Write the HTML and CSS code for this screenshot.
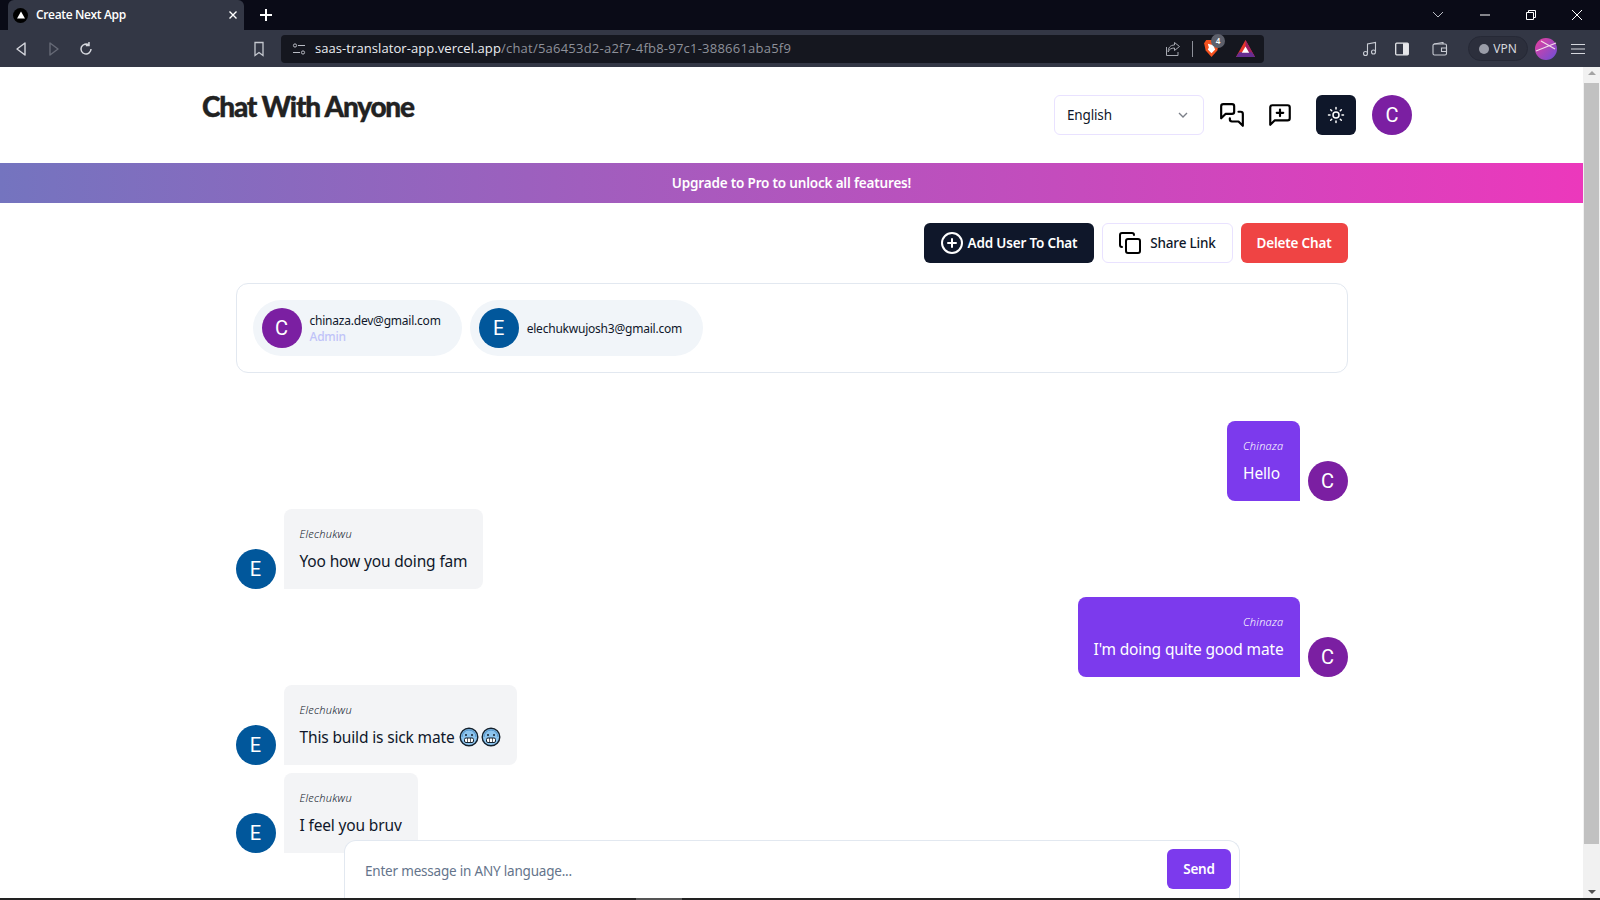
FILE: index.html
```html
<!DOCTYPE html>
<html lang="en">
<head>
    <meta charset="UTF-8">
    <meta name="viewport" content="width=device-width, initial-scale=1.0">
    <title>Create Next App</title>
    <link rel="stylesheet" href="styles.css">
</head>
<body>
    <!-- browser frame -->
    <div class="tabstrip">
        <div class="tab">
            <span class="favicon"><svg width="8" height="8" viewBox="0 0 8 8"><path d="M4 .5 8 7.500H0z" fill="#fff"/></svg></span>
            <span class="tab-title">Create Next App</span>
            <svg class="tab-close" width="10" height="10" viewBox="0 0 10 10"><path d="M1.500 1.500l7 7M8.500 1.500l-7 7" stroke="#fff" stroke-width="1.400"/></svg>
        </div>
        <svg class="new-tab" width="14" height="14" viewBox="0 0 14 14"><path d="M7 1v12M1 7h12" stroke="#fff" stroke-width="2"/></svg>
        <div class="window-btns">
            <svg width="14" height="10" viewBox="0 0 14 10"><path d="M2 2l5 5 5-5" fill="none" stroke="#b9bcc4" stroke-width="1"/></svg>
            <svg width="12" height="12" viewBox="0 0 12 12"><path d="M1 6h10" stroke="#fff" stroke-width="1"/></svg>
            <svg width="12" height="12" viewBox="0 0 12 12"><path d="M1.500 3.500h7v7h-7zM3.500 3.500v-2h7v7h-2" fill="none" stroke="#fff" stroke-width="1"/></svg>
            <svg width="12" height="12" viewBox="0 0 12 12"><path d="M1 1l10 10M11 1 1 11" stroke="#fff" stroke-width="1"/></svg>
        </div>
    </div>

    <div class="toolbar">
        <div class="nav-btns">
            <svg width="14" height="16" viewBox="0 0 14 16"><path d="M11 2 3 8l8 6z" fill="none" stroke="#d5d7dd" stroke-width="1.400" stroke-linejoin="round"/></svg>
            <svg width="14" height="16" viewBox="0 0 14 16"><path d="M3 2l8 6-8 6z" fill="none" stroke="#666a76" stroke-width="1.400" stroke-linejoin="round"/></svg>
            <svg class="reload" width="16" height="16" viewBox="0 0 16 16"><path d="M13 8a5 5 0 1 1-2-4M11 1v3.400H7.800" fill="none" stroke="#d5d7dd" stroke-width="1.500"/></svg>
        </div>
        <svg class="bookmark" width="12" height="16" viewBox="0 0 12 16"><path d="M2 1.500h8v13l-4-3-4 3z" fill="none" stroke="#c5c8cf" stroke-width="1.300"/></svg>
        <div class="address">
            <svg width="14" height="14" viewBox="0 0 14 14"><g fill="none" stroke="#b9bcc4" stroke-width="1"><circle cx="3" cy="3.500" r="1.600"/><path d="M6 3.500h7M1 10.500h7"/><circle cx="11" cy="10.500" r="1.600"/></g></svg>
            <span class="url"><span class="url-host">saas-translator-app.vercel.app</span>/chat/5a6453d2-a2f7-4fb8-97c1-388661aba5f9</span>
            <svg class="share" width="16" height="16" viewBox="0 0 16 16"><path d="M9.500 1.500l5 4-5 4V7C6 7 4 8.500 3.200 11c-.2-4 2-7 6.300-7zM13 11v3.500H1.500V6" fill="none" stroke="#a5a8b0" stroke-width="1"/></svg>
            <span class="addr-sep"></span>
            <span class="shield">
                <svg width="17" height="19" viewBox="0 0 16 18"><path d="M3 1h10l2 3-1.500 7L8 17 2.500 11 1 4z" fill="#f4511e"/><path d="M4.500 4.500l3.500 1 3.500-1-1 3.500 1 2-3.500 3.500L4.500 10l1-2z" fill="#fff"/></svg>
                <span class="shield-count">4</span>
            </span>
            <svg class="bat" width="19" height="17" viewBox="0 0 18 16"><path d="M9 0l9 16H0z" fill="#e8362a"/><path d="M9 0l9 16h-5L9 6z" fill="#9e1f63"/><path d="M0 16l3-4.500h12l3 4.500z" fill="#662d91"/><path d="M9 6l3.500 6h-7z" fill="#fff"/></svg>
        </div>
        <div class="tool-btns">
            <svg class="tool-music" width="16" height="16" viewBox="0 0 16 16"><g fill="none" stroke="#c9ccd4" stroke-width="1.100"><path d="M5.500 12.500V3l8-1.500v9.500"/><circle cx="3.500" cy="12.500" r="2"/><circle cx="11.500" cy="11" r="2"/></g></svg>
            <svg class="tool-side" width="14" height="14" viewBox="0 0 14 14"><rect x=".7" y="1.200" width="12.600" height="11.600" rx="1" fill="#333745" stroke="#e6e7ea" stroke-width="1.300"/><rect x="8" y="1.200" width="5.300" height="11.600" fill="#e6e7ea"/></svg>
            <svg width="16" height="14" viewBox="0 0 16 14"><g fill="none" stroke="#c9ccd4" stroke-width="1.100"><rect x="1" y="2" width="13.500" height="11" rx="1.500"/><path d="M2 2l9-1.500V2M9.500 6h5v3.500h-5z"/></g></svg>
        </div>
        <div class="vpn"><span class="vpn-dot"></span>VPN</div>
        <svg class="profile" width="22" height="22" viewBox="0 0 22 22"><defs><linearGradient id="pf" x1="0" y1="0" x2="1" y2="1"><stop offset="0" stop-color="#ea3d9c"/><stop offset="1" stop-color="#6a4fd8"/></linearGradient></defs><circle cx="11" cy="11" r="11" fill="url(#pf)"/><path d="M1 13 21 5M6 3l14 8" stroke="#f4dbe8" stroke-width="1.200"/></svg>
        <svg class="menu" width="14" height="12" viewBox="0 0 14 12"><path d="M0 1.500h14M0 6h14M0 10.500h14" stroke="#d5d7dd" stroke-width="1.200"/></svg>
    </div>

    <div class="viewport">
        <div class="page">
            <header class="site-header">
                <a class="logo">Chat With Anyone</a>
                <div class="header-actions">
                    <div class="lang-select">
                        <span>English</span>
                        <svg width="16" height="16" viewBox="0 0 24 24" fill="none" stroke="#7b7f88" stroke-width="2"><path d="m6 9 6 6 6-6"/></svg>
                    </div>
                    <svg class="icon-link" width="26" height="26" viewBox="0 0 24 24" fill="none" stroke="#000" stroke-width="2" stroke-linejoin="round" stroke-linecap="round"><path d="M14 9a2 2 0 0 1-2 2H6l-4 4V4c0-1.100.9-2 2-2h8a2 2 0 0 1 2 2v5Z"/><path d="M18 9h2a2 2 0 0 1 2 2v11l-4-4h-6a2 2 0 0 1-2-2v-1"/></svg>
                    <svg class="icon-link" width="26" height="26" viewBox="0 0 24 24" fill="none" stroke="#000" stroke-width="2" stroke-linejoin="round" stroke-linecap="round"><path d="M21 15a2 2 0 0 1-2 2H7l-4 4V5a2 2 0 0 1 2-2h14a2 2 0 0 1 2 2z"/><path d="M12 7v6M9 10h6"/></svg>
                    <button class="theme-btn">
                        <svg width="18" height="18" viewBox="0 0 24 24" fill="none" stroke="#fff" stroke-width="2" stroke-linecap="round"><circle cx="12" cy="12" r="4"/><path d="M12 2v2M12 20v2M4.900 4.900l1.400 1.400M17.700 17.700l1.400 1.400M2 12h2M20 12h2M6.300 17.700l-1.400 1.400M19.100 4.900l-1.400 1.400"/></svg>
                    </button>
                    <span class="avatar avatar-c">C</span>
                </div>
            </header>

            <div class="upgrade-banner">Upgrade to Pro to unlock all features!</div>

            <main class="chat">
                <div class="chat-actions">
                    <button class="btn btn-dark">
                        <svg width="24" height="24" viewBox="0 0 24 24" fill="none" stroke="#fff" stroke-width="2" stroke-linecap="round"><circle cx="12" cy="12" r="10"/><path d="M8 12h8M12 8v8"/></svg>
                        Add User To Chat
                    </button>
                    <button class="btn btn-outline">
                        <svg width="24" height="24" viewBox="0 0 24 24" fill="none" stroke="#000" stroke-width="2" stroke-linecap="round" stroke-linejoin="round"><rect x="8" y="8" width="14" height="14" rx="2"/><path d="M4 16c-1.100 0-2-.9-2-2V4c0-1.100.9-2 2-2h10c1.100 0 2 .9 2 2"/></svg>
                        Share Link
                    </button>
                    <button class="btn btn-red">Delete Chat</button>
                </div>

                <section class="members">
                    <div class="member">
                        <span class="avatar avatar-c">C</span>
                        <div class="member-info">
                            <p>chinaza.dev@gmail.com</p>
                            <p class="member-role">Admin</p>
                        </div>
                    </div>
                    <div class="member">
                        <span class="avatar avatar-e">E</span>
                        <div class="member-info">
                            <p>elechukwujosh3@gmail.com</p>
                        </div>
                    </div>
                </section>

                <section class="messages">
                    <div class="msg msg-own">
                        <div class="bubble">
                            <p class="bubble-name">Chinaza</p>
                            <p>Hello</p>
                        </div>
                        <span class="avatar avatar-c">C</span>
                    </div>
                    <div class="msg">
                        <span class="avatar avatar-e">E</span>
                        <div class="bubble">
                            <p class="bubble-name">Elechukwu</p>
                            <p>Yoo how you doing fam</p>
                        </div>
                    </div>
                    <div class="msg msg-own">
                        <div class="bubble">
                            <p class="bubble-name">Chinaza</p>
                            <p>I'm doing quite good mate</p>
                        </div>
                        <span class="avatar avatar-c">C</span>
                    </div>
                    <div class="msg">
                        <span class="avatar avatar-e">E</span>
                        <div class="bubble">
                            <p class="bubble-name">Elechukwu</p>
                            <p class="emoji-line"><span>This build is sick mate</span>
                                <svg class="emoji" viewBox="0 0 20 20"><circle cx="10" cy="10" r="8.800" fill="#8cc4ee" stroke="#14202c" stroke-width="1.400"/><path d="M3 10a7 7 0 0 1 14 0" fill="none" stroke="#4f92c9" stroke-width="1"/><rect x="5.500" y="11" width="9" height="4.500" rx="1.500" fill="#fff" stroke="#14202c"/><path d="M8.500 11v4.500M11.500 11v4.500" stroke="#14202c" stroke-width=".7"/><circle cx="7" cy="8" r="1" fill="#14202c"/><circle cx="13" cy="8" r="1" fill="#14202c"/></svg>
                                <svg class="emoji" viewBox="0 0 20 20"><circle cx="10" cy="10" r="8.800" fill="#8cc4ee" stroke="#14202c" stroke-width="1.400"/><path d="M3 10a7 7 0 0 1 14 0" fill="none" stroke="#4f92c9" stroke-width="1"/><rect x="5.500" y="11" width="9" height="4.500" rx="1.500" fill="#fff" stroke="#14202c"/><path d="M8.500 11v4.500M11.500 11v4.500" stroke="#14202c" stroke-width=".7"/><circle cx="7" cy="8" r="1" fill="#14202c"/><circle cx="13" cy="8" r="1" fill="#14202c"/></svg>
                            </p>
                        </div>
                    </div>
                    <div class="msg">
                        <span class="avatar avatar-e">E</span>
                        <div class="bubble">
                            <p class="bubble-name">Elechukwu</p>
                            <p>I feel you bruv</p>
                        </div>
                    </div>
                </section>
            </main>

            <form class="composer">
                <span class="composer-input">Enter message in ANY language...</span>
                <button type="button" class="send-btn">Send</button>
            </form>
        </div>

        <div class="scrollbar">
            <span class="arrow-up"></span>
            <span class="thumb"></span>
            <span class="arrow-down"></span>
        </div>
    </div>

    <div class="taskbar"><span class="taskbar-mark"></span></div>
</body>
</html>
```

FILE: styles.css
```css
* {
    box-sizing: border-box;
}
html, body {
    height: 100%;
}
body {
    margin: 0;
    display: flex;
    flex-direction: column;
    overflow: hidden;
    background: white;
    color: #0f172a;
    font-family: "Noto Sans", Arial, sans-serif;
}
p {
    margin: 0;
}
button {
    font-family: inherit;
    border: none;
    cursor: pointer;
}

/* browser frame */
.tabstrip {
    height: 30px;
    flex: none;
    display: flex;
    align-items: center;
    padding-left: 8px;
    background: #0a0b17;
}
.tab {
    width: 236px;
    height: 30px;
    display: flex;
    align-items: center;
    padding: 0 6px 0 5px;
    background: #333745;
    border-radius: 6px 6px 0 0;
    color: white;
}
.favicon {
    width: 15px;
    height: 15px;
    display: flex;
    align-items: center;
    justify-content: center;
    background: black;
    border-radius: 50%;
}
.tab-title {
    margin: 0 0 1px 8px;
    flex: 1;
    font-size: 12px;
    font-weight: 600;
    font-family: "Open Sans", sans-serif;
    letter-spacing: -0.35px;
}
.new-tab {
    margin-left: 15px;
}
.window-btns {
    margin-left: auto;
    display: flex;
    align-items: center;
    gap: 34px;
    padding-right: 17px;
}
.toolbar {
    height: 37px;
    flex: none;
    display: flex;
    align-items: center;
    background: #333745;
}
.nav-btns {
    display: flex;
    align-items: center;
    gap: 19px;
    padding-left: 14px;
}
.reload {
    margin-left: -2px;
}
.bookmark {
    margin-left: 159px;
}
.address {
    width: 983px;
    height: 28px;
    margin-left: 16px;
    display: flex;
    align-items: center;
    padding: 0 9px 0 11px;
    background: #15171f;
    border-radius: 4px;
}
.url {
    margin: 0 0 2px 9px;
    flex: 1;
    font-size: 13px;
    font-family: "Open Sans", sans-serif;
    letter-spacing: 0.23px;
    color: #8e919a;
    white-space: nowrap;
}
.url-host {
    color: #eceef2;
    letter-spacing: 0.07px;
}
.share {
    margin-right: 11px;
}
.addr-sep {
    width: 1px;
    height: 16px;
    background: #8e919a;
    margin-right: 10px;
}
.shield {
    position: relative;
    display: flex;
    margin-right: 16px;
}
.shield-count {
    position: absolute;
    top: -5px;
    left: 8px;
    width: 14px;
    height: 14px;
    border-radius: 50%;
    background: #5d606b;
    color: white;
    font-size: 8px;
    font-weight: 600;
    line-height: 14px;
    text-align: center;
}
.tool-btns {
    margin-left: 98px;
    display: flex;
    align-items: center;
}
.tool-music {
    margin-right: 17px;
}
.tool-side {
    margin-right: 23px;
}
.vpn {
    margin-left: 20px;
    width: 60px;
    height: 25px;
    display: flex;
    align-items: center;
    justify-content: center;
    gap: 4px;
    border: 1px solid #262936;
    border-radius: 13px;
    background: #2c2f3c;
    color: #d5d7dd;
    font-size: 12px;
}
.vpn-dot {
    width: 10px;
    height: 10px;
    border-radius: 50%;
    background: #9a9da8;
}
.profile {
    margin-left: 7px;
}
.menu {
    margin-left: 14px;
}

/* page */
.viewport {
    flex: 1;
    min-height: 0;
    display: flex;
}
.page {
    flex: 1;
    position: relative;
    overflow: hidden;
}
.site-header {
    height: 96px;
    display: flex;
    justify-content: space-between;
    padding: 26px 171px 0 202px;
}
.header-actions {
    display: flex;
    align-items: center;
    height: 40px;
    margin-top: 2px;
    gap: 16px;
}
.logo {
    font-family: Lato, sans-serif;
    font-size: 28px;
    font-weight: 900;
    line-height: 26px;
    letter-spacing: -1.2px;
    color: #222;
    -webkit-text-stroke: 0.4px #222;
}
.lang-select {
    width: 150px;
    height: 40px;
    display: flex;
    align-items: center;
    justify-content: space-between;
    padding: 0 12px;
    border: 1px solid #e9e2ff;
    border-radius: 6px;
    font-size: 13.5px;
    letter-spacing: -0.15px;
}
.icon-link {
    margin: 0 7px 0 -1px;
}
.theme-btn {
    width: 40px;
    height: 40px;
    display: flex;
    align-items: center;
    justify-content: center;
    background: #0f172a;
    border-radius: 6px;
}
.avatar {
    width: 40px;
    height: 40px;
    flex: none;
    display: flex;
    align-items: center;
    justify-content: center;
    border-radius: 50%;
    color: white;
    font-family: Roboto, sans-serif;
    font-size: 20px;
}
.avatar-c {
    background: #7b1fa2;
}
.avatar-e {
    background: #01579b;
}
.upgrade-banner {
    height: 40px;
    display: flex;
    align-items: center;
    justify-content: center;
    padding-bottom: 1px;
    background: linear-gradient(to right, #7474bf, #ec38bc);
    color: white;
    font-size: 13.5px;
    font-weight: 600;
    letter-spacing: -0.18px;
}
.chat {
    width: 1112px;
    margin: 0 auto;
}
.chat-actions {
    display: flex;
    justify-content: flex-end;
    gap: 8px;
    padding-top: 20px;
}
.btn {
    height: 40px;
    display: flex;
    align-items: center;
    justify-content: center;
    gap: 4px;
    padding: 0 0 1px;
    border-radius: 6px;
    font-size: 13.5px;
    font-weight: 600;
    letter-spacing: -0.18px;
}
.btn-dark {
    width: 170px;
    background: #0f172a;
    color: white;
}
.btn-outline {
    width: 131px;
    gap: 8px;
    background: white;
    border: 1px solid #e9e2ff;
    color: #0f172a;
    font-weight: 500;
}
.btn-red {
    width: 107px;
    background: #ef4444;
    color: white;
}
.members {
    height: 90px;
    margin-top: 20px;
    display: flex;
    gap: 8px;
    padding: 16px;
    border: 1px solid #e2e8f0;
    border-radius: 12px;
}
.member {
    height: 56px;
    display: flex;
    align-items: center;
    gap: 8px;
    padding: 0 21px 0 9px;
    background: #f1f5f9;
    border-radius: 28px;
    font-size: 12px;
    line-height: 16px;
    letter-spacing: -0.22px;
}
.member-info {
    padding-top: 2px;
}
.member-role {
    color: #bfc3f8;
    font-weight: 500;
}
.messages {
    margin-top: 48px;
    display: flex;
    flex-direction: column;
    gap: 8px;
}
.msg {
    display: flex;
    align-items: flex-end;
    gap: 8px;
}
.msg-own {
    justify-content: flex-end;
}
.bubble {
    padding: 16px;
    background: #f3f4f6;
    border-radius: 8px 8px 8px 0;
    font-size: 15.5px;
    line-height: 24px;
    letter-spacing: -0.15px;
}
.msg-own .bubble {
    background: #7c3aed;
    border-radius: 8px 8px 0 8px;
    color: white;
    text-align: right;
}
.msg-own .bubble p:last-child {
    text-align: left;
}
.bubble-name {
    margin-bottom: 6px;
    font-size: 11px;
    font-style: italic;
    font-weight: 300;
    line-height: 18px;
    letter-spacing: 0.25px;
}
.emoji-line {
    display: flex;
    align-items: center;
    gap: 2px;
}
.emoji-line span {
    margin-right: 2px;
}
.emoji {
    width: 20px;
    height: 20px;
}
.composer {
    position: absolute;
    left: 344px;
    bottom: 0;
    width: 896px;
    height: 58px;
    display: flex;
    align-items: flex-start;
    justify-content: space-between;
    padding: 8px 8px 0 20px;
    background: white;
    border: 1px solid #e2e8f0;
    border-bottom: none;
    border-radius: 12px 12px 0 0;
}
.composer-input {
    padding-top: 2px;
    font-size: 13.5px;
    line-height: 40px;
    letter-spacing: -0.2px;
    color: #64748b;
}
.send-btn {
    width: 64px;
    height: 40px;
    background: #7c3aed;
    border-radius: 6px;
    color: white;
    font-size: 13.5px;
    font-weight: 600;
    letter-spacing: -0.18px;
}
.scrollbar {
    width: 17px;
    flex: none;
    display: flex;
    flex-direction: column;
    align-items: center;
    background: #f1f1f1;
}
.thumb {
    flex: 1;
    width: 15px;
    margin: 4px 0 42px;
    background: #c1c1c1;
}
.arrow-up, .arrow-down {
    width: 0;
    height: 0;
    margin: 4px 0;
    border-left: 4px solid transparent;
    border-right: 4px solid transparent;
}
.arrow-up {
    border-bottom: 4px solid #a3a3a3;
}
.arrow-down {
    border-top: 4px solid #505050;
}
.taskbar {
    height: 2px;
    flex: none;
    background: #222;
}
.taskbar-mark {
    display: block;
    width: 46px;
    height: 2px;
    margin-left: 636px;
    background: #555;
}
```
